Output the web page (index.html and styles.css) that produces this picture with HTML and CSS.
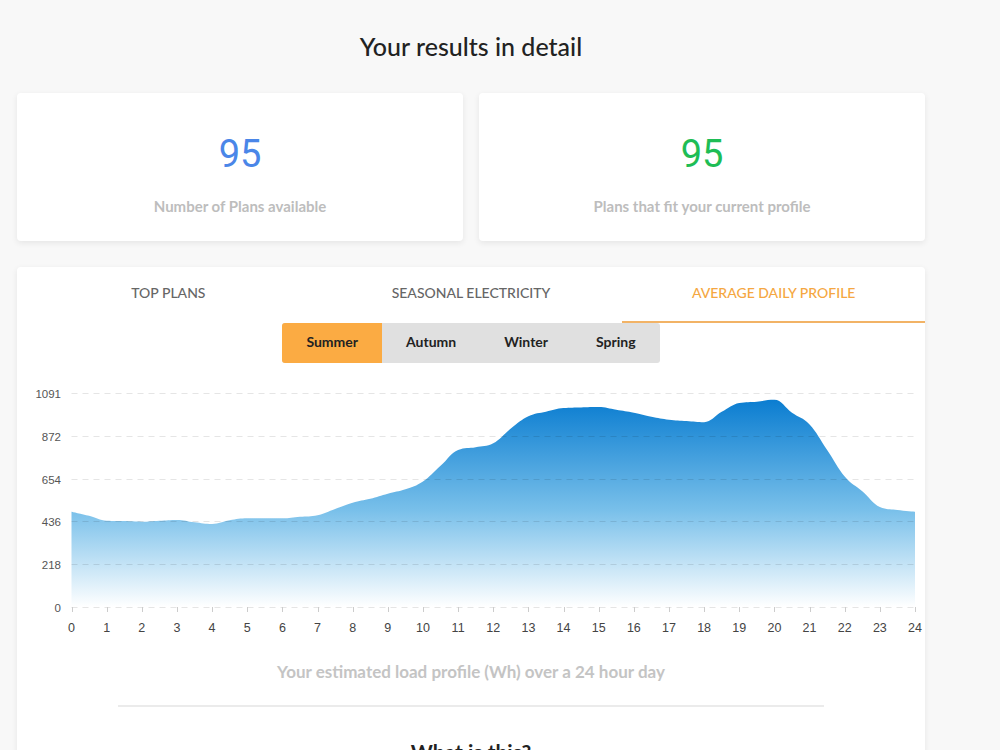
FILE: index.html
```html
<!DOCTYPE html>
<html lang="en">
<head>
  <meta charset="UTF-8" />
  <meta name="viewport" content="width=device-width, initial-scale=1.0"/>
  <title>Your results in detail</title>
  <link rel="stylesheet" href="styles.css">
</head>
<body>
  <main class="page">
    <h1 class="title">Your results in detail</h1>

    <div class="stats">
      <div class="card stat">
        <div class="stat-num blue">95</div>
        <div class="stat-label">Number of Plans available</div>
      </div>
      <div class="card stat">
        <div class="stat-num green">95</div>
        <div class="stat-label">Plans that fit your current profile</div>
      </div>
    </div>

    <section class="card panel">
      <nav class="tabs">
        <div class="tab">Top plans</div>
        <div class="tab">Seasonal electricity</div>
        <div class="tab active">Average daily profile</div>
      </nav>

      <div class="seasons">
        <button class="season on">Summer</button>
        <button class="season">Autumn</button>
        <button class="season">Winter</button>
        <button class="season">Spring</button>
      </div>

      <svg id="chart" class="chart" width="908" height="262" viewBox="0 0 908 262"></svg>

      <p class="caption">Your estimated load profile (Wh) over a 24 hour day</p>
      <hr class="divider">
      <h2 class="what">What is this?</h2>
    </section>
  </main>

  <script>
    (function () {
      // profil moyen (Wh) par demi-heure, de 0h à 24h
      const data = [486, 465, 440, 438, 435, 440, 444, 432, 423, 442, 452, 452, 452, 460,
                    468, 500, 532, 552, 578, 600, 640, 720, 801, 815, 835, 910, 972, 995,
                    1014, 1017, 1019, 1005, 990, 970, 955, 948, 942, 995, 1040, 1047, 1056,
                    990, 930, 800, 665, 590, 510, 495, 486];
      const yMax = 1091;
      const x0 = 54.5, x1 = 898, yTop = 13, yBottom = 227;
      const NS = "http://www.w3.org/2000/svg";
      const svg = document.getElementById("chart");

      const px = h => x0 + (x1 - x0) * h / 24;
      const py = v => yBottom - (yBottom - yTop) * v / yMax;

      function el(name, attrs, text, parent) {
        const e = document.createElementNS(NS, name);
        for (const k in attrs) e.setAttribute(k, attrs[k]);
        if (text !== undefined) e.textContent = text;
        (parent || svg).appendChild(e);
        return e;
      }

      // dégradé de la surface
      const defs = el("defs", {});
      const grad = el("linearGradient", { id: "fill", x1: 0, y1: yTop, x2: 0, y2: yBottom, gradientUnits: "userSpaceOnUse" }, undefined, defs);
      [["0", "#0479cf"], ["0.55", "#79c0ea"], ["1", "#ffffff"]].forEach(s => {
        el("stop", { offset: s[0], "stop-color": s[1] }, undefined, grad);
      });

      // courbe lissée (même principe qu'une areaspline)
      const pts = data.map((v, i) => [px(i / 2), py(v)]);
      const sm = 1.5, den = sm + 1;
      const ctrl = pts.map((p, i) => {
        const prev = pts[i - 1], next = pts[i + 1];
        if (!prev || !next) return null;
        let lx = (sm * p[0] + prev[0]) / den, ly = (sm * p[1] + prev[1]) / den;
        let rx = (sm * p[0] + next[0]) / den, ry = (sm * p[1] + next[1]) / den;
        const corr = ((ry - ly) * (rx - p[0])) / (rx - lx) + p[1] - ry;
        ly += corr; ry += corr;
        if (ly > prev[1] && ly > p[1]) { ly = Math.max(prev[1], p[1]); ry = 2 * p[1] - ly; }
        else if (ly < prev[1] && ly < p[1]) { ly = Math.min(prev[1], p[1]); ry = 2 * p[1] - ly; }
        if (ry > next[1] && ry > p[1]) { ry = Math.max(next[1], p[1]); ly = 2 * p[1] - ry; }
        else if (ry < next[1] && ry < p[1]) { ry = Math.min(next[1], p[1]); ly = 2 * p[1] - ry; }
        return { lx, ly, rx, ry };
      });
      let d = `M ${pts[0][0]} ${pts[0][1]}`;
      for (let i = 1; i < pts.length; i++) {
        const a = ctrl[i - 1], b = ctrl[i];
        const c1 = a ? [a.rx, a.ry] : pts[i - 1];
        const c2 = b ? [b.lx, b.ly] : pts[i];
        d += ` C ${c1[0]} ${c1[1]} ${c2[0]} ${c2[1]} ${pts[i][0]} ${pts[i][1]}`;
      }
      d += ` L ${x1} ${yBottom} L ${x0} ${yBottom} Z`;
      el("path", { d: d, fill: "url(#fill)" });

      // grille et libellés de l'axe Y
      [0, 218, 436, 654, 872, 1091].forEach(v => {
        const y = Math.round(py(v)) + 0.5;
        el("line", { x1: x0, x2: x1, y1: y, y2: y, class: "grid" });
        el("text", { x: 44, y: y + 4, class: "ylab" }, v);
      });

      // axe X
      for (let h = 0; h <= 24; h++) {
        const x = Math.round(px(h)) + 0.5;
        el("line", { x1: x, x2: x, y1: yBottom, y2: yBottom + 5, class: "tick" });
        el("text", { x: px(h), y: 252, class: "xlab" }, h);
      }
    })();
  </script>
</body>
</html>
```

FILE: styles.css
```css
/* Fond général */
body {
  margin: 0;
  background-color: #f8f8f8;
  font-family: Lato, "Open Sans", sans-serif;
  color: #222;
}

.page {
  width: 908px;
  padding: 0 0 0 17px;
}

/* Titre principal */
.title {
  margin: 32px 0 33px;
  font-size: 25px;
  line-height: 28px;
  font-weight: 500;
  text-align: center;
}

/* Cartes blanches */
.card {
  background-color: #fff;
  border-radius: 4px;
  box-shadow: 0 2px 6px rgba(0, 0, 0, 0.08);
}

.stats {
  display: grid;
  grid-template-columns: 1fr 1fr;
  gap: 16px;
}

.stat {
  height: 148px;
  box-sizing: border-box;
  padding-top: 39px;
  text-align: center;
}

.stat-num {
  font-family: Roboto, "Noto Sans", sans-serif;
  font-size: 38px;
  line-height: 44px;
}

.blue { color: #4a86e8; }
.green { color: #1ebd55; }

.stat-label {
  margin-top: 21px;
  font-size: 15px;
  line-height: 18px;
  font-weight: 700;
  color: #bdbdbd;
}

/* Bloc du graphique */
.panel {
  margin-top: 26px;
  padding-bottom: 20px;
  text-align: center;
}

.tabs {
  display: flex;
}

.tab {
  flex: 1;
  height: 56px;
  box-sizing: border-box;
  padding-top: 17px;
  font-size: 14px;
  line-height: 18px;
  font-weight: 500;
  text-transform: uppercase;
  color: #666;
  border-bottom: 2px solid transparent;
}

.tab.active {
  color: #f5a742;
  border-bottom-color: #f2b366;
}

/* Boutons de saison */
.seasons {
  display: inline-flex;
  background-color: #e0e0e0;
  border-radius: 3px;
  overflow: hidden;
}

.season {
  height: 40px;
  padding: 0 24px 3px;
  border: none;
  background: transparent;
  font-family: inherit;
  font-size: 14px;
  font-weight: 700;
  color: #222;
}

.season.on {
  background-color: #fbab43;
}

.chart {
  display: block;
  margin-top: 17px;
}

.chart .grid {
  stroke: rgba(0, 0, 0, 0.1);
  stroke-width: 1;
  stroke-dasharray: 6 5;
}

.chart .tick {
  stroke: #ccc;
  stroke-width: 1;
}

.chart .ylab {
  font-family: "Liberation Sans", Arial, sans-serif;
  font-size: 11.5px;
  fill: #555;
  text-anchor: end;
}

.chart .xlab {
  font-family: "Liberation Sans", Arial, sans-serif;
  font-size: 12.5px;
  fill: #444;
  text-anchor: middle;
}

.caption {
  margin: 20px 0 0;
  font-size: 17px;
  line-height: 20px;
  font-weight: 700;
  color: #c4c4c4;
}

.divider {
  margin: 23px 101px 0;
  border: none;
  border-top: 2px solid #ebebeb;
}

.what {
  margin: 32px 0 0;
  font-size: 21px;
  font-weight: 700;
}
```
